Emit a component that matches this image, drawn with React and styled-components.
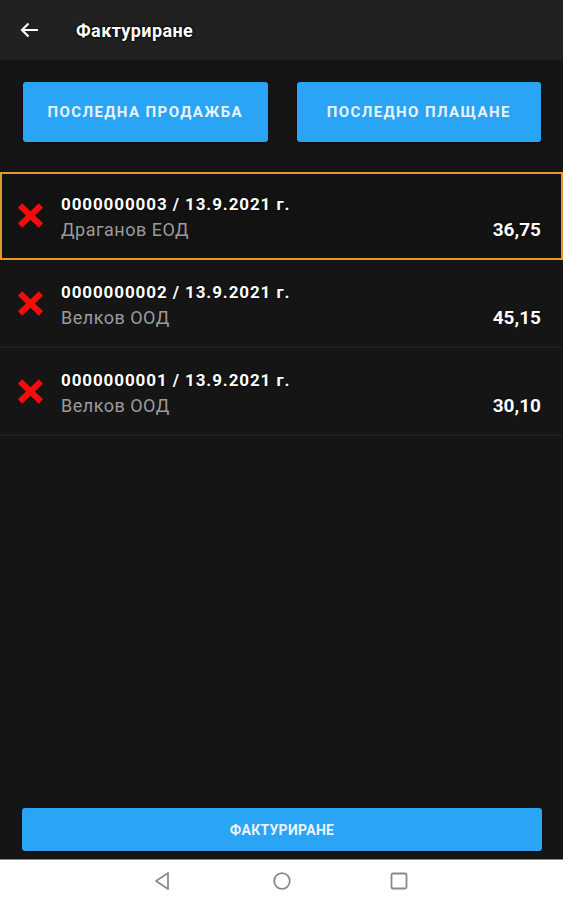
import React from "react";
import styled, { createGlobalStyle } from "styled-components";

const Global = createGlobalStyle`
  html, body { margin: 0; padding: 0; background: #151515; }
  body { font-family: Roboto, "Noto Sans", "Liberation Sans", sans-serif; }
  * { box-sizing: border-box; }
`;

const Screen = styled.div`
  width: 563px;
  height: 900px;
  display: flex;
  flex-direction: column;
  background: #151515;
  overflow: hidden;
`;

const Header = styled.header`
  height: 60px;
  flex: none;
  background: #212121;
  display: flex;
  align-items: center;
  padding-left: 20px;
  gap: 37px;
`;

const BackButton = styled.button`
  border: 0;
  background: none;
  padding: 0;
  width: 19px;
  height: 19px;
  display: flex;
  align-items: center;
  justify-content: center;
  color: #fff;
  cursor: pointer;
`;

const Title = styled.h1`
  margin: 0;
  font-size: 18px;
  font-weight: 700;
  letter-spacing: 0.4px;
  color: #fff;
  text-shadow: 0 0 3px #000, 0 0 2px #000;
`;

const Main = styled.main`
  flex: 1;
  display: flex;
  flex-direction: column;
`;

const ActionRow = styled.div`
  display: grid;
  grid-template-columns: 1fr 1fr;
  gap: 29px;
  padding: 22px 22px 0 23px;
`;

const Button = styled.button`
  height: ${(p) => (p.$tall ? "60px" : "43px")};
  border: 0;
  border-radius: 3px;
  background: #2aa4f4;
  color: #e9f3fb;
  font-family: Roboto, "Noto Sans", sans-serif;
  font-weight: 700;
  font-size: ${(p) => (p.$tall ? "15px" : "14px")};
  letter-spacing: ${(p) => (p.$tall ? "1.4px" : "0.3px")};
  text-transform: uppercase;
  box-shadow: 0 1px 2px rgba(0, 0, 0, 0.5);
  cursor: pointer;
`;

const List = styled.ul`
  list-style: none;
  margin: 30px 0 0;
  padding: 0;
`;

const Row = styled.li`
  height: 88px;
  display: flex;
  align-items: center;
  padding: 4px 20px 0 15px;
  border: 2px solid ${(p) => (p.$selected ? "#e6962a" : "transparent")};
  border-bottom-color: ${(p) => (p.$selected ? "#e6962a" : "#1f1f1f")};
  background: ${(p) => (p.$selected ? "#121212" : "#151515")};
`;

const DeleteIcon = styled.svg`
  flex: none;
  width: 27px;
  height: 25px;
  margin-bottom: 5px;
`;

const Info = styled.div`
  flex: 1;
  margin-left: 17px;
  display: flex;
  flex-direction: column;
`;

const InvoiceNo = styled.div`
  font-size: 17px;
  line-height: 24px;
  font-weight: 700;
  letter-spacing: 0.9px;
  color: #fff;
  text-shadow: 0 0 2px #000;
`;

const SubLine = styled.div`
  display: flex;
  justify-content: space-between;
  align-items: baseline;
  line-height: 28px;
`;

const Client = styled.span`
  font-size: 18px;
  letter-spacing: 0.5px;
  color: #9b9b9b;
`;

const Amount = styled.span`
  font-size: 19px;
  font-weight: 700;
  color: #fff;
  text-shadow: 0 0 2px #000;
`;

const Footer = styled.div`
  flex: none;
  padding: 0 21px 8px 22px;
  display: flex;
  flex-direction: column;
`;

const NavBar = styled.nav`
  flex: none;
  height: 41px;
  background: #fff;
  border-top: 1px solid #8a8a8a;
  position: relative;
`;

const NavIcon = styled.svg`
  position: absolute;
  top: 11px;
  left: ${(p) => p.$x}px;
  width: 20px;
  height: 20px;
`;

const invoices = [
  { no: "0000000003", date: "13.9.2021 г.", client: "Драганов ЕОД", amount: "36,75", selected: true },
  { no: "0000000002", date: "13.9.2021 г.", client: "Велков ООД", amount: "45,15" },
  { no: "0000000001", date: "13.9.2021 г.", client: "Велков ООД", amount: "30,10" },
];

export default function App() {
  return (
    <Screen>
      <Global />
      <Header>
        <BackButton aria-label="Назад">
          <svg width="19" height="16" viewBox="0 0 19 16" fill="none">
            <path d="M18 8H2.5M8.5 1.5L2 8l6.5 6.5" stroke="#fff" strokeWidth="2.2" />
          </svg>
        </BackButton>
        <Title>Фактуриране</Title>
      </Header>
      <Main>
        <ActionRow>
          <Button $tall>Последна продажба</Button>
          <Button $tall>Последно плащане</Button>
        </ActionRow>
        <List>
          {invoices.map((inv) => (
            <Row key={inv.no} $selected={inv.selected}>
              <DeleteIcon viewBox="0 0 27 25">
                <path d="M3 2.5L24 22.5M24 2.5L3 22.5" stroke="#f60a0a" strokeWidth="6.2" />
              </DeleteIcon>
              <Info>
                <InvoiceNo>
                  {inv.no} / {inv.date}
                </InvoiceNo>
                <SubLine>
                  <Client>{inv.client}</Client>
                  <Amount>{inv.amount}</Amount>
                </SubLine>
              </Info>
            </Row>
          ))}
        </List>
      </Main>
      <Footer>
        <Button>Фактуриране</Button>
      </Footer>
      <NavBar>
        <NavIcon $x={152} viewBox="0 0 20 20">
          <path d="M16 2L4 10l12 8z" fill="none" stroke="#8a8a8a" strokeWidth="1.8" strokeLinejoin="round" />
        </NavIcon>
        <NavIcon $x={272} viewBox="0 0 20 20">
          <circle cx="10" cy="10" r="7.8" fill="none" stroke="#8a8a8a" strokeWidth="1.8" />
        </NavIcon>
        <NavIcon $x={389} viewBox="0 0 20 20">
          <rect x="2.5" y="2.5" width="15" height="15" rx="1.5" fill="none" stroke="#8a8a8a" strokeWidth="1.8" />
        </NavIcon>
      </NavBar>
    </Screen>
  );
}
